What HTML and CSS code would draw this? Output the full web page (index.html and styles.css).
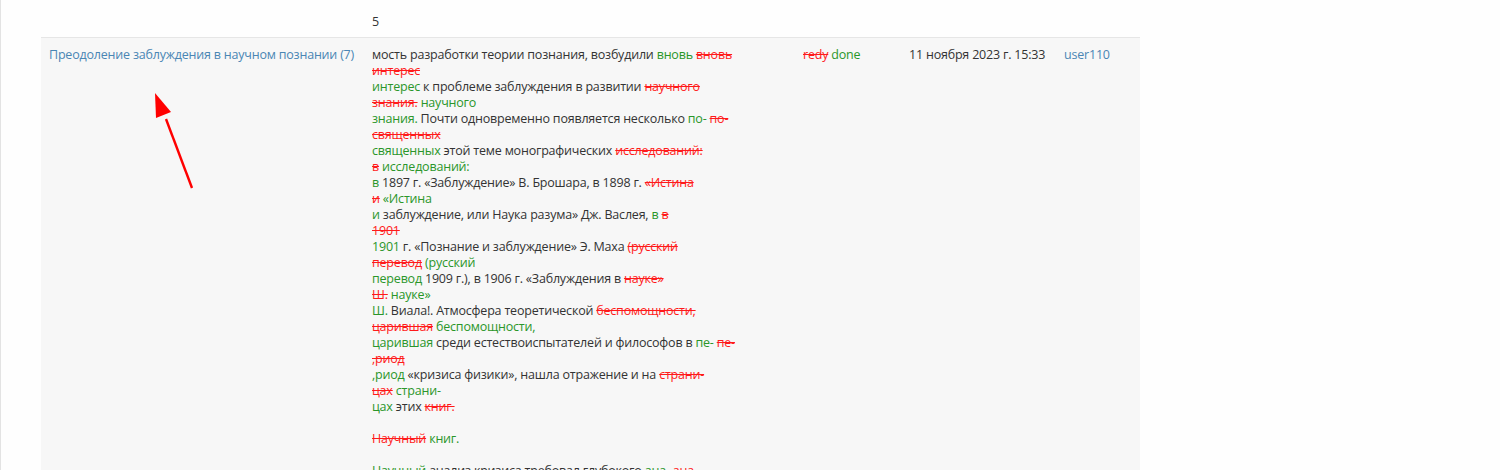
FILE: index.html
```html
<!DOCTYPE html>
<html lang="ru">
<head>
<meta charset="utf-8">
<title>История изменений</title>
<link rel="stylesheet" href="styles.css">
</head>
<body>
<div class="page">
  <table class="log">
    <colgroup>
      <col class="c-title"><col class="c-text"><col class="c-status"><col class="c-date"><col class="c-user">
    </colgroup>
    <tr class="row-prev">
      <td></td>
      <td>5</td>
      <td></td>
      <td></td>
      <td></td>
    </tr>
    <tr class="row-main">
      <td><a class="link" href="#">Преодоление заблуждения в научном познании (7)</a></td>
      <td class="diff">мость разработки теории познания, возбудили <ins>вновь</ins> <del>вновь<br>интерес</del><br><ins>интерес</ins> к проблеме заблуждения в развитии <del>научного<br>знания.</del> <ins>научного<br>знания.</ins> Почти одновременно появляется несколько <ins>по-</ins> <del>по-<br>священных</del><br><ins>священных</ins> этой теме монографических <del>исследований:<br>в</del> <ins>исследований:<br>в</ins> 1897 г. «Заблуждение» В. Брошара, в 1898 г. <del>«Истина<br>и</del> <ins>«Истина<br>и</ins> заблуждение, или Наука разума» Дж. Васлея, <ins>в</ins> <del>в<br>1901</del><br><ins>1901</ins> г. «Познание и заблуждение» Э. Маха <del>(русский<br>перевод</del> <ins>(русский<br>перевод</ins> 1909 г.), в 1906 г. «Заблуждения в <del>науке»<br>Ш.</del> <ins>науке»<br>Ш.</ins> Виала!. Атмосфера теоретической <del>беспомощности,<br>царившая</del> <ins>беспомощности,<br>царившая</ins> среди естествоиспытателей и философов в <ins>пе-</ins> <del>пе-<br>,риод</del><br><ins>,риод</ins> «кризиса физики», нашла отражение и на <del>страни-<br>цах</del> <ins>страни-<br>цах</ins> этих <del>книг.</del><br><br><del>Научный</del> <ins>книг.</ins><br><br><ins>Научный</ins> анализ кризиса требовал глубокого <ins>ана-</ins> <del>ана-</del></td>
      <td><del>redy</del> <ins>done</ins></td>
      <td>11 ноября 2023 г. 15:33</td>
      <td><a class="link" href="#">user110</a></td>
    </tr>
  </table>
  <svg class="arrow" width="60" height="110" viewBox="0 0 60 110" aria-hidden="true">
    <line x1="51" y1="99" x2="25" y2="30" stroke="#ff0000" stroke-width="2.4"/>
    <polygon points="14,4 15,29 30,23" fill="#ff0000"/>
  </svg>
</div>
</body>
</html>
```

FILE: styles.css
```css
html, body {
  margin: 0;
  padding: 0;
  background: #fefefe;
}

body {
  font-family: "Open Sans", "Noto Sans", sans-serif;
  font-size: 12.5px;
  letter-spacing: -0.2px;
  line-height: 16px;
  color: #333333;
}

.page {
  position: relative;
  min-height: 470px;
  border-left: 1px solid #e3e3e3;
  padding-left: 40px;
}

.log {
  border-collapse: collapse;
  table-layout: fixed;
  width: 1099px;
}

.c-title { width: 323px; }
.c-text { width: 431px; }
.c-status { width: 106px; }
.c-date { width: 155px; }
.c-user { width: 84px; }

.log td {
  vertical-align: top;
  padding: 9px 8px 8px;
  white-space: nowrap;
}

.row-prev td {
  padding-top: 14px;
  padding-bottom: 7px;
}

.row-main td {
  background: #f7f7f7;
  border-top: 1px solid #e6e6e6;
  padding-bottom: 40px;
}

.link {
  color: #4a86b4;
  text-decoration: none;
}

.diff {
  white-space: nowrap;
}

ins {
  color: #2a962a;
  text-decoration: none;
}

del {
  color: #ff1a1a;
  text-decoration: line-through;
}

.arrow {
  position: absolute;
  left: 140px;
  top: 89px;
}
```
